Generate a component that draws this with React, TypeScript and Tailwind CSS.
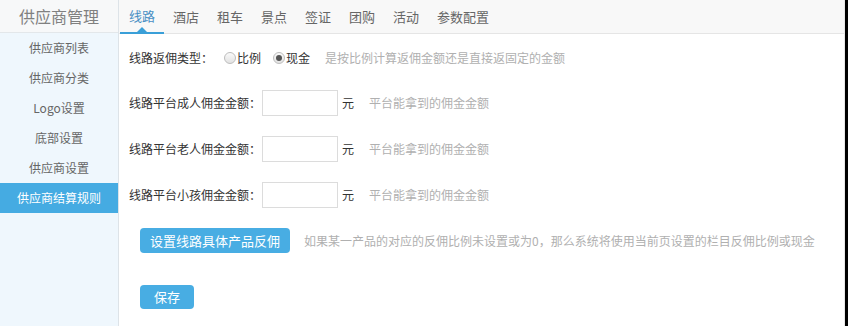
import React from "react";

const font = { fontFamily: '"Noto Sans CJK SC", "Microsoft YaHei", sans-serif' };

const sideItems = ["供应商列表", "供应商分类", "Logo设置", "底部设置", "供应商设置", "供应商结算规则"];
const tabs = ["线路", "酒店", "租车", "景点", "签证", "团购", "活动", "参数配置"];

function Radio({ checked }: { checked?: boolean }) {
  return (
    <span className="inline-flex items-center justify-center w-[12px] h-[12px] rounded-full border border-[#bdbdbd] bg-gradient-to-b from-[#fafafa] to-[#e2e2e2] mr-[1px]">
      {checked && <span className="w-[6px] h-[6px] rounded-full bg-[#555]" />}
    </span>
  );
}

function AmountRow({ label }: { label: string }) {
  return (
    <div className="flex items-center h-[26px]">
      <span className="text-[12px] text-[#333] w-[133px]">{label}</span>
      <input className="w-[76px] h-[26px] border border-[#dcdcdc] bg-white outline-none" />
      <span className="text-[12px] text-[#333] ml-[4px]">元</span>
      <span className="text-[12px] text-[#b0b0b0] ml-[15px]">平台能拿到的佣金金额</span>
    </div>
  );
}

export default function App() {
  return (
    <div className="flex w-[848px] h-[326px] bg-white overflow-hidden" style={font}>
      <div className="w-[119px] shrink-0 bg-[#eff7fd] border-r border-[#dde3e8] flex flex-col">
        <div className="h-[33px] flex items-center justify-center text-[16px] text-[#808080] border-b border-[#e3e7ea] bg-[#f7f8f9]">
          供应商管理
        </div>
        {sideItems.map((s, i) => (
          <div
            key={s}
            className={
              i === sideItems.length - 1
                ? "h-[30px] flex items-center justify-center text-[12px] text-white bg-[#45abe2]"
                : "h-[30px] flex items-center justify-center text-[12px] text-[#666]"
            }
          >
            {s}
          </div>
        ))}
      </div>
      <div className="flex-1 flex flex-col border-r border-[#e8e8e8]">
        <div className="h-[34px] bg-[#f8f8f8] border-b border-[#e5e5e5] flex items-stretch pl-[1px]">
          {tabs.map((t, i) => (
            <div
              key={t}
              className={
                i === 0
                  ? "relative px-[9px] flex items-center text-[13px] text-[#4a8fc4] border-b-2 border-[#3a9fd8] -mb-[1px]"
                  : "px-[9px] flex items-center text-[13px] text-[#666]"
              }
            >
              {t}
              {i === 0 && (
                <span className="absolute left-1/2 -translate-x-1/2 bottom-0 w-0 h-0 border-l-[5px] border-r-[5px] border-b-[5px] border-l-transparent border-r-transparent border-b-[#3a9fd8]" />
              )}
            </div>
          ))}
        </div>
        <div className="pl-[10px] pt-[15px] flex flex-col">
          <div className="flex items-center h-[18px]">
            <span className="text-[12px] text-[#333] w-[95px]">线路返佣类型：</span>
            <Radio />
            <span className="text-[12px] text-[#333] mr-[12px]">比例</span>
            <Radio checked />
            <span className="text-[12px] text-[#333]">现金</span>
            <span className="text-[12px] text-[#b0b0b0] ml-[15px]">是按比例计算返佣金额还是直接返固定的金额</span>
          </div>
          <div className="flex flex-col gap-[20px] mt-[23px]">
            <AmountRow label="线路平台成人佣金金额：" />
            <AmountRow label="线路平台老人佣金金额：" />
            <AmountRow label="线路平台小孩佣金金额：" />
          </div>
          <div className="flex items-center mt-[20px] ml-[11px]">
            <button className="h-[25px] w-[150px] rounded-[4px] bg-[#48ade3] text-white text-[13px]">
              设置线路具体产品反佣
            </button>
            <span className="text-[12px] text-[#b0b0b0] ml-[14px]">
              如果某一产品的对应的反佣比例未设置或为0，那么系统将使用当前页设置的栏目反佣比例或现金
            </span>
          </div>
          <div className="mt-[30px] ml-[11px]">
            <button className="h-[24px] w-[54px] rounded-[4px] bg-[#48ade3] text-white text-[13px]">保存</button>
          </div>
        </div>
      </div>
      <div className="w-[3px] shrink-0 bg-black" />
    </div>
  );
}
